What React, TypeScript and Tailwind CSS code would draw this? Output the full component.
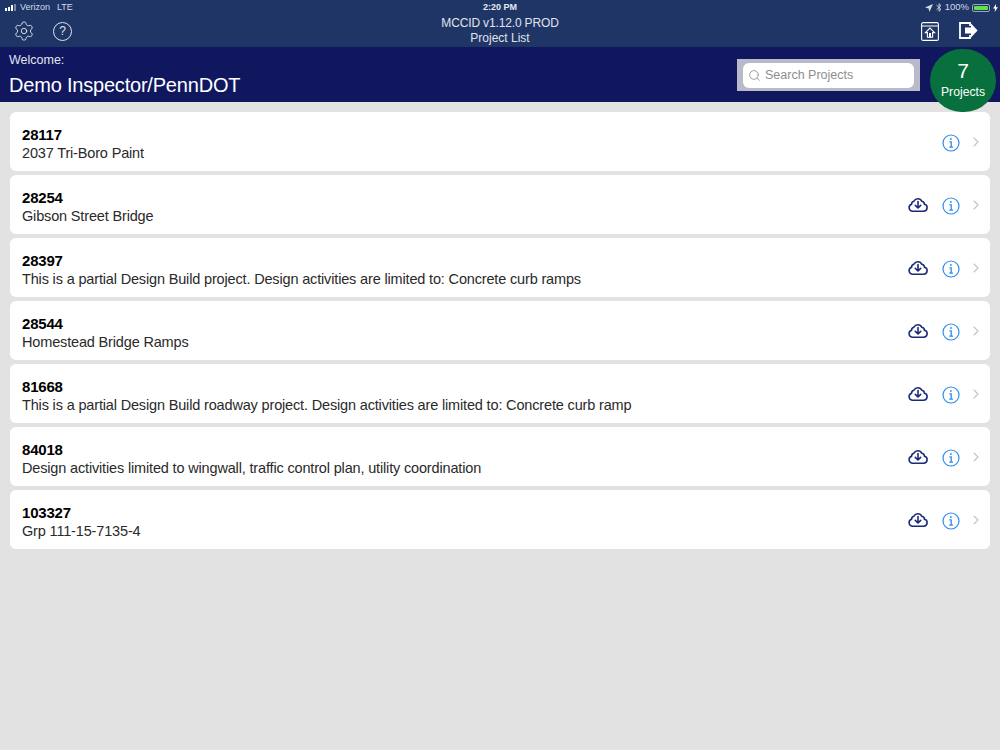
import { ChevronRight, Search, Settings } from 'lucide-react'

type Project = {
    id: string,
    name: string,
    download: boolean
}

const projects: Project[] = [
    { id: '28117', name: '2037 Tri-Boro Paint', download: false },
    { id: '28254', name: 'Gibson Street Bridge', download: true },
    { id: '28397', name: 'This is a partial Design Build project. Design activities are limited to: Concrete curb ramps', download: true },
    { id: '28544', name: 'Homestead Bridge Ramps', download: true },
    { id: '81668', name: 'This is a partial Design Build roadway project. Design activities are limited to: Concrete curb ramp', download: true },
    { id: '84018', name: 'Design activities limited to wingwall, traffic control plan, utility coordination', download: true },
    { id: '103327', name: 'Grp 111-15-7135-4', download: true },
]

const CloudDownload = () => (
    <svg width="20" height="16" viewBox="0 0 20 16" fill="none" stroke="#1b2a78" strokeWidth="1.6" strokeLinecap="round" strokeLinejoin="round">
        <path d="M4.3 14.2h11.2a3.5 3.5 0 0 0 .9-6.9 3 3 0 0 0-2.5-3 4.5 4.5 0 0 0-8-.1 3 3 0 0 0-2.3 3 3.6 3.6 0 0 0 .7 7z" />
        <path d="M10 4.6v6.2M7.3 8.4l2.7 2.6 2.7-2.6" />
    </svg>
)

const InfoIcon = () => (
    <svg width="18" height="18" viewBox="0 0 18 18" fill="none" stroke="#2f8bef">
        <circle cx="9" cy="9" r="8" strokeWidth="1.2" />
        <path d="M7.4 7.8H9.2V13M7.2 13.2h3.8" strokeWidth="1.3" />
        <circle cx="8.9" cy="5" r="0.9" fill="#2f8bef" stroke="none" />
    </svg>
)

const HomeBox = () => (
    <svg width="18" height="19" viewBox="0 0 18 19" fill="none" stroke="white">
        <rect x="0.6" y="0.6" width="16.8" height="17.8" rx="1.5" strokeWidth="1.1" />
        <path d="M0.6 4h16.8" strokeWidth="1" />
        <path d="M9 6 4.4 10.6h2v4.6h5.2v-4.6h2z" strokeWidth="1.1" />
        <path d="M8 11h2v4.4H8z" fill="white" stroke="none" />
    </svg>
)

const LogoutIcon = () => (
    <svg width="19" height="17" viewBox="0 0 19 17" fill="none">
        <path d="M11 4V1H1v15h10v-3" stroke="white" strokeWidth="1.8" />
        <path d="M6 5.6h6V1.4l6.6 7.1-6.6 7.1v-4.2H6z" fill="white" />
    </svg>
)

const SignalBars = () => (
    <div className="flex items-end gap-[1px] h-[7px]">
        <span className="w-[2px] h-[3px] bg-white" />
        <span className="w-[2px] h-[4px] bg-white" />
        <span className="w-[2px] h-[6px] bg-white" />
        <span className="w-[2px] h-[7px] bg-white/40" />
    </div>
)

const ProjectRow = ({ project }: { project: Project }) => (
    <div className="h-[59px] bg-white rounded-[6px] pl-3 flex">
        <div className="pt-[14px] flex-1">
            <div className="text-[15px] leading-[18px] font-bold tracking-[-0.2px] text-black">{project.id}</div>
            <div className="text-[14.5px] leading-[18px] tracking-[-0.16px] text-[#2a2a2a]">{project.name}</div>
        </div>
        <div className="flex items-start">
            {project.download && <div className="mt-[22px] mr-[14px]"><CloudDownload /></div>}
            <div className="mt-[22px] mr-[8px]"><InfoIcon /></div>
            <ChevronRight className="mt-[22px] mr-[6px] text-[#c4c4c8]" size={16} strokeWidth={1.6} />
        </div>
    </div>
)

export default function App() {
    return (
        <div className="relative w-[1000px] h-[750px] overflow-hidden bg-[#e2e2e2] font-['Liberation_Sans',Arial,sans-serif]">
            <header className="h-[47px] bg-[#1e3566] text-white flex justify-between">
                <div className="w-[300px] px-[5px] pt-[2px]">
                    <div className="flex items-center gap-[4px] h-[11px] text-[9px] text-[#d5dae6]">
                        <SignalBars />
                        <span>Verizon</span>
                        <span className="ml-[3px]">LTE</span>
                    </div>
                    <div className="flex items-center gap-[18px] mt-[7px] ml-[8px]">
                        <Settings size={22} strokeWidth={1} className="text-[#dfe3ec]" />
                        <span className="w-[19px] h-[19px] rounded-full border border-[#dfe3ec] text-[12px] flex items-center justify-center text-[#dfe3ec]">?</span>
                    </div>
                </div>
                <div className="text-center pt-[2px]">
                    <div className="text-[9px] leading-[11px] font-bold text-[#e7e9f0]">2:20 PM</div>
                    <div className="text-[12px] leading-[15px] mt-[3px] tracking-[-0.15px] text-[#e0e3eb]">MCCID v1.12.0 PROD</div>
                    <div className="text-[12px] leading-[15px] text-[#e0e3eb]">Project List</div>
                </div>
                <div className="w-[300px] pt-[2px] pr-[2px] flex flex-col items-end">
                    <div className="flex items-center gap-[3px] h-[11px] text-[9.5px] text-[#d5dae6]">
                        <svg width="8" height="8" viewBox="0 0 8 8" fill="#d5dae6"><path d="M8 0 0 3.6l3.6.8.8 3.6z" /></svg>
                        <svg width="6" height="9" viewBox="0 0 6 9" fill="none" stroke="#d5dae6" strokeWidth="0.9"><path d="M0.5 2.2 5 6.4 3 8.3V.7l2 1.9L.5 6.8" /></svg>
                        <span>100%</span>
                        <span className="w-[18px] h-[8px] rounded-[2px] border border-[#9aa4bb] p-[1px] flex"><span className="flex-1 bg-[#5fe04f] rounded-[1px]" /></span>
                        <svg width="5" height="8" viewBox="0 0 5 8" fill="white"><path d="M3 0 0 4.6h2L1.6 8 5 3.2H3z" /></svg>
                    </div>
                    <div className="flex items-start gap-[20px] mt-[9px] mr-[20px]">
                        <HomeBox />
                        <LogoutIcon />
                    </div>
                </div>
            </header>

            <div className="h-[55px] bg-[#10175f] text-white flex justify-between pl-[9px]">
                <div>
                    <div className="text-[12.5px] leading-[15px] pt-[6px] text-[#e3e5f0]">Welcome:</div>
                    <div className="text-[20px] leading-[26px] mt-[4px] tracking-[-0.2px]">Demo Inspector/PennDOT</div>
                </div>
                <div className="w-[183px] h-[32px] mt-[12px] mr-[80px] bg-[#b9bac9] px-[6px] py-[3.5px]">
                    <div className="h-[25px] bg-white rounded-[6px] flex items-center pl-[5px] gap-[4px] text-[12.5px] text-[#8e8e93]">
                        <Search size={13} strokeWidth={1.6} />
                        <span>Search Projects</span>
                    </div>
                </div>
            </div>

            <div className="absolute left-[930px] top-[49px] w-[66px] h-[63px] rounded-full bg-[#08703c] text-white text-center">
                <div className="text-[21px] leading-[24px] pt-[10px] font-light">7</div>
                <div className="text-[12.2px] leading-[15px] mt-[2px]">Projects</div>
            </div>

            <main className="px-[10px] pt-[10px] flex flex-col gap-[4px]">
                {projects.map(project => <ProjectRow key={project.id} project={project} />)}
            </main>
        </div>
    )
}
